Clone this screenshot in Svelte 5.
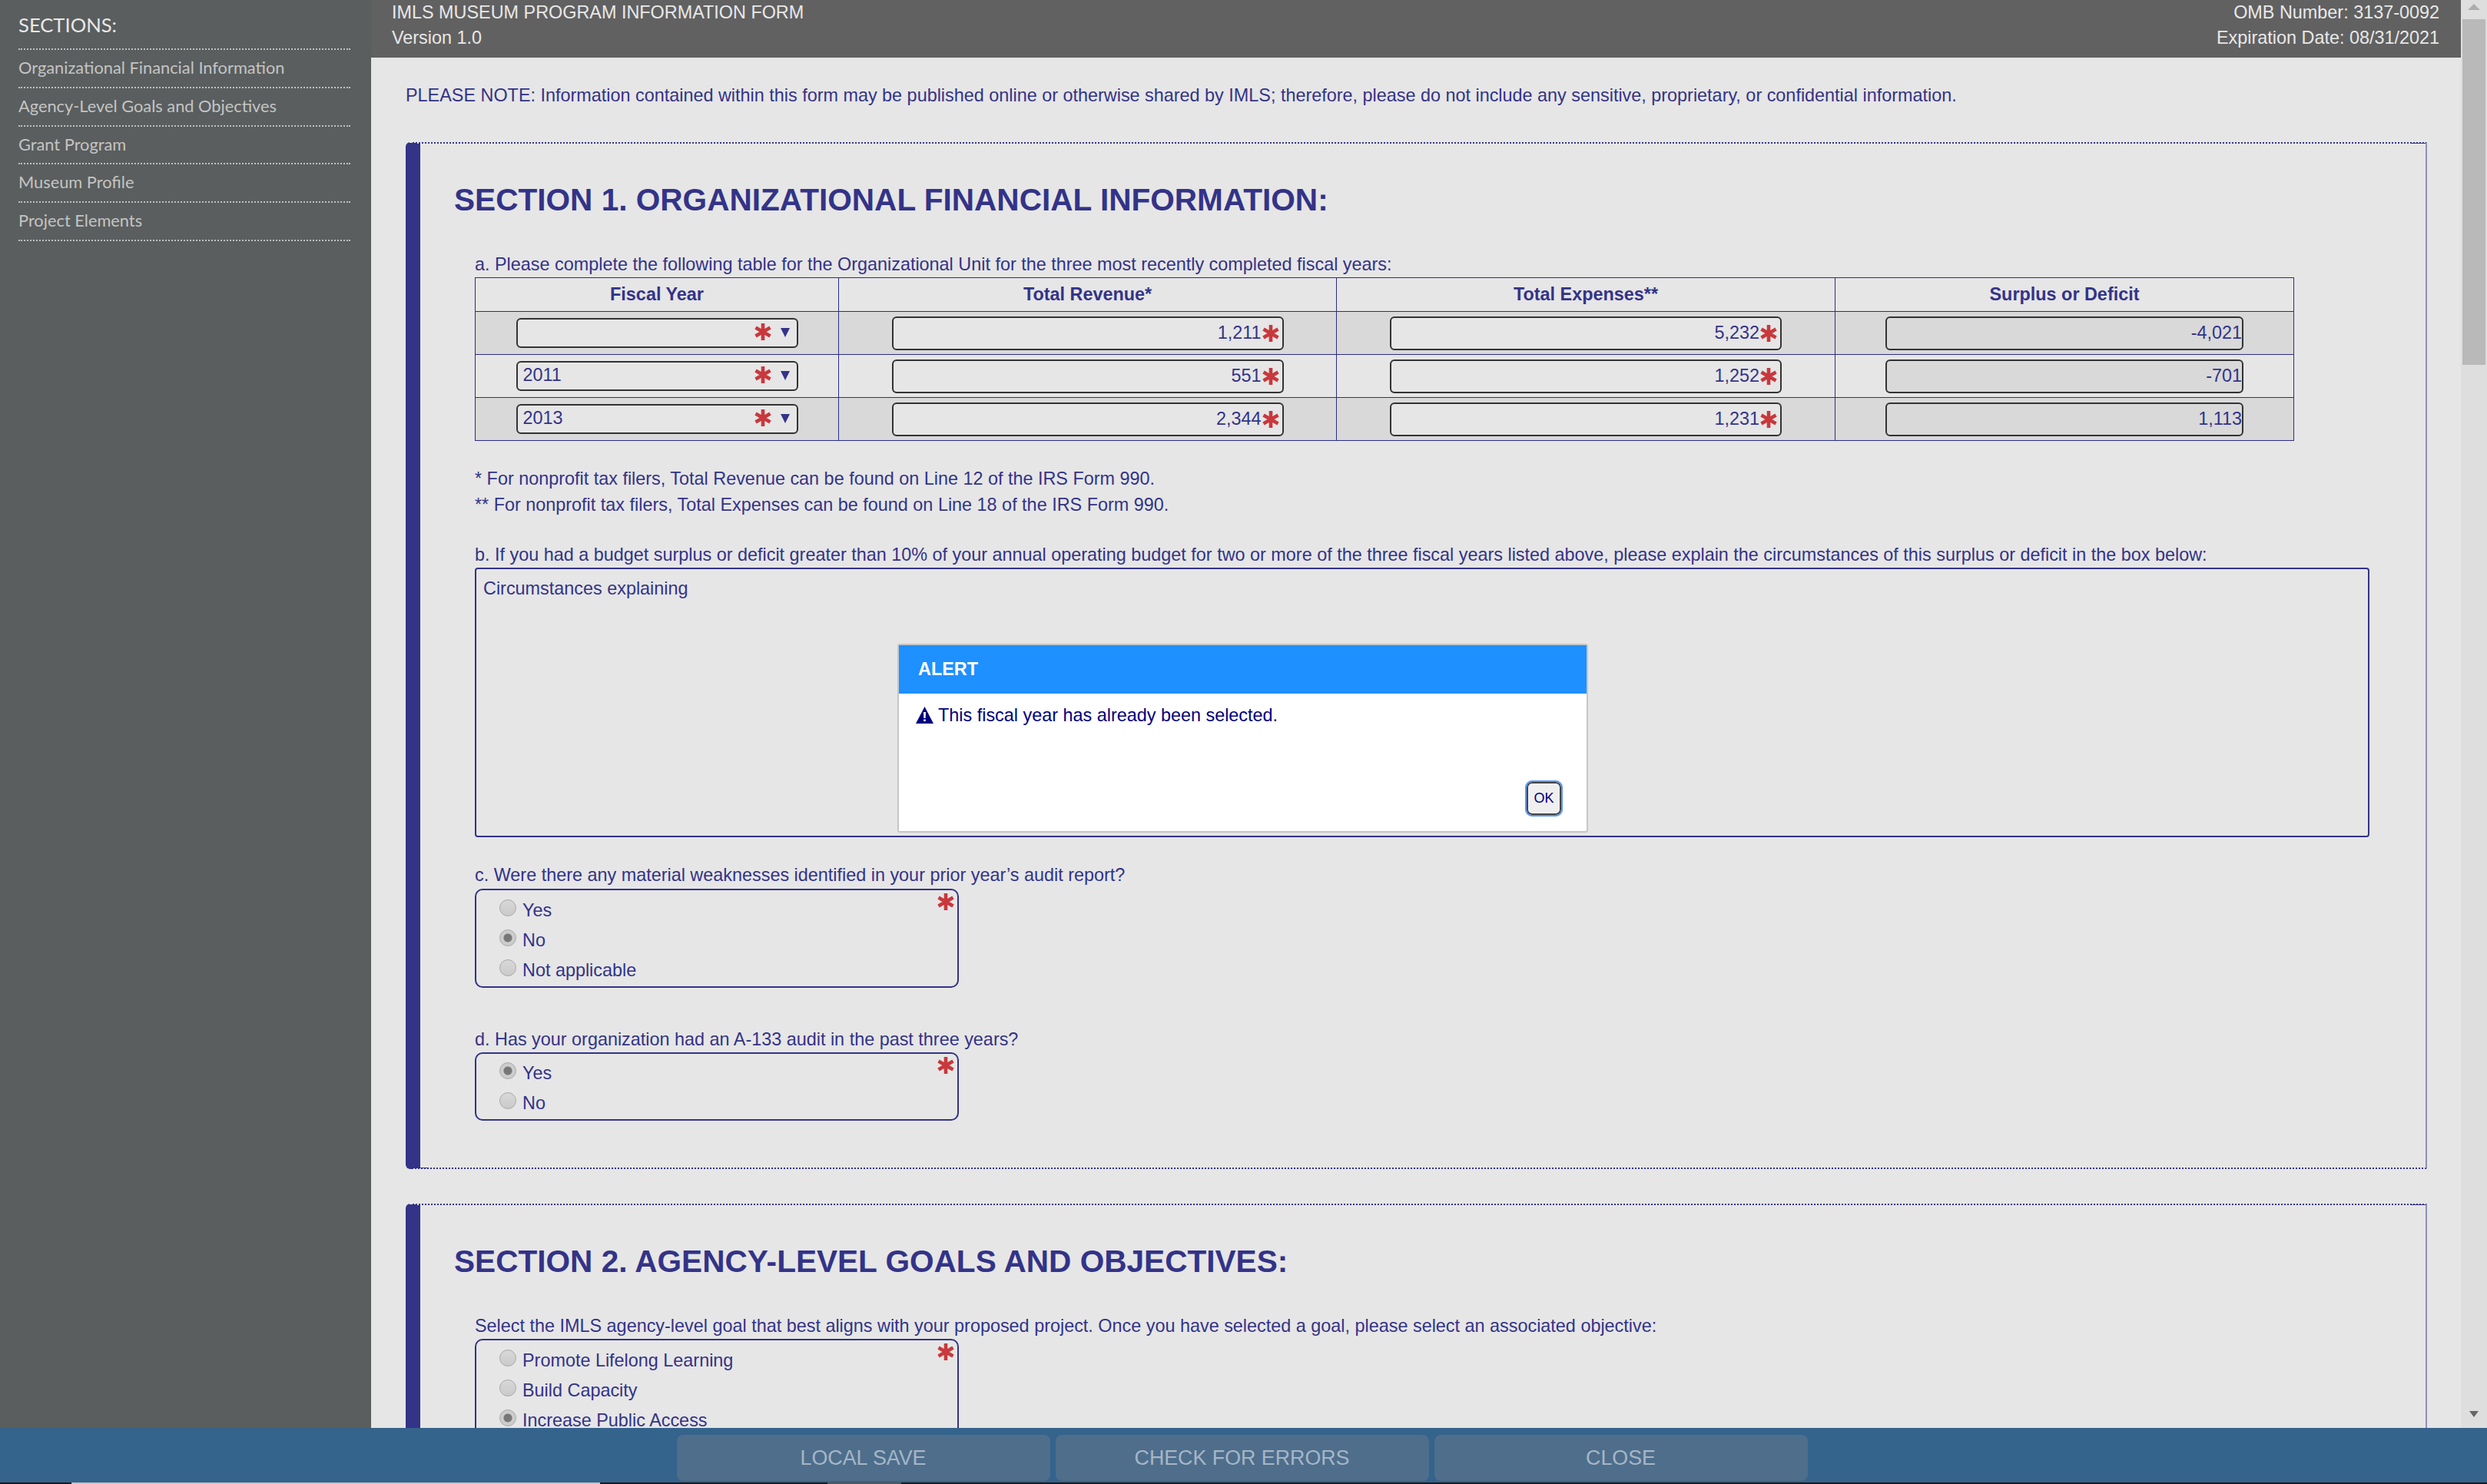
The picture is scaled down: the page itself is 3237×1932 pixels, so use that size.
<script>
  const links = ['Organizational Financial Information', 'Agency-Level Goals and Objectives', 'Grant Program', 'Museum Profile', 'Project Elements'];
  const rows = [
    { year: '', rev: '1,211', exp: '5,232', sur: '-4,021' },
    { year: '2011', rev: '551', exp: '1,252', sur: '-701' },
    { year: '2013', rev: '2,344', exp: '1,231', sur: '1,113' }
  ];
</script>

{#snippet star(cls)}
  <svg class="star {cls}" viewBox="0 0 22 22" aria-hidden="true">
    <path d="M11 0V22M1.5 5.5L20.5 16.5M20.5 5.5L1.5 16.5" stroke="#c8383c" stroke-width="4.6" fill="none" />
  </svg>
{/snippet}

{#snippet radio(name, label, checked)}
  <label class="radio-row">
    <input type="radio" {name} {checked} disabled />
    <span>{label}</span>
  </label>
{/snippet}

<div class="root">
  <aside class="sidebar">
    <div class="side-title">SECTIONS:</div>
    <ul>
      {#each links as l}
        <li>{l}</li>
      {/each}
    </ul>
  </aside>

  <div class="main">
    <header class="top">
      <div>
        <div>IMLS MUSEUM PROGRAM INFORMATION FORM</div>
        <div>Version 1.0</div>
      </div>
      <div class="omb">
        <div>OMB Number: 3137-0092</div>
        <div>Expiration Date: 08/31/2021</div>
      </div>
    </header>

    <div class="content">
      <p class="note">PLEASE NOTE: Information contained within this form may be published online or otherwise shared by IMLS; therefore, please do not include any sensitive, proprietary, or confidential information.</p>

      <section class="sec">
        <h2>SECTION 1. ORGANIZATIONAL FINANCIAL INFORMATION:</h2>
        <div class="lbl a">a. Please complete the following table for the Organizational Unit for the three most recently completed fiscal years:</div>
        <table>
          <colgroup><col class="c1" /><col class="c2" /><col class="c3" /><col class="c4" /></colgroup>
          <thead>
            <tr><th>Fiscal Year</th><th>Total Revenue*</th><th>Total Expenses**</th><th>Surplus or Deficit</th></tr>
          </thead>
          <tbody>
            {#each rows as r}
              <tr>
                <td>
                  <div class="select">
                    <span>{r.year}</span>
                    {@render star('s-sel')}
                    <svg class="caret" viewBox="0 0 12 12" aria-hidden="true"><path d="M0 0H12L6 12Z" fill="#333388" /></svg>
                  </div>
                </td>
                <td><div class="field"><input class="num" readonly value={r.rev} />{@render star('s-in')}</div></td>
                <td><div class="field"><input class="num" readonly value={r.exp} />{@render star('s-in')}</div></td>
                <td><input class="num calc" readonly value={r.sur} /></td>
              </tr>
            {/each}
          </tbody>
        </table>

        <div class="foot">* For nonprofit tax filers, Total Revenue can be found on Line 12 of the IRS Form 990.</div>
        <div class="lbl">** For nonprofit tax filers, Total Expenses can be found on Line 18 of the IRS Form 990.</div>

        <div class="lbl b">b. If you had a budget surplus or deficit greater than 10% of your annual operating budget for two or more of the three fiscal years listed above, please explain the circumstances of this surplus or deficit in the box below:</div>
        <textarea readonly value="Circumstances explaining"></textarea>

        <div class="lbl c">c. Were there any material weaknesses identified in your prior year’s audit report?</div>
        <div class="group g3">
          {@render star('s-grp')}
          {@render radio('c', 'Yes', false)}
          {@render radio('c', 'No', true)}
          {@render radio('c', 'Not applicable', false)}
        </div>

        <div class="lbl d">d. Has your organization had an A-133 audit in the past three years?</div>
        <div class="group g2">
          {@render star('s-grp')}
          {@render radio('d', 'Yes', true)}
          {@render radio('d', 'No', false)}
        </div>
      </section>

      <section class="sec two">
        <h2>SECTION 2. AGENCY-LEVEL GOALS AND OBJECTIVES:</h2>
        <div class="lbl a">Select the IMLS agency-level goal that best aligns with your proposed project. Once you have selected a goal, please select an associated objective:</div>
        <div class="group g3 g-goal">
          {@render star('s-grp')}
          {@render radio('g', 'Promote Lifelong Learning', false)}
          {@render radio('g', 'Build Capacity', false)}
          {@render radio('g', 'Increase Public Access', true)}
        </div>
      </section>
    </div>
  </div>

  <div class="scroll">
    <svg class="up" viewBox="0 0 16 8" aria-hidden="true"><path d="M8 0L16 8H0Z" fill="#adadad" /></svg>
    <div class="thumb"></div>
    <svg class="down" viewBox="0 0 12 8" aria-hidden="true"><path d="M0 0H12L6 8Z" fill="#666" /></svg>
  </div>

  <div class="alert" role="alertdialog">
    <div class="alert-head">ALERT</div>
    <div class="alert-body">
      <svg class="warn" viewBox="0 0 23 22" aria-hidden="true">
        <path d="M11.5 0L23 22H0Z" fill="#000080" />
        <path d="M10 7H13L12.6 15H10.4ZM10.2 16.5H12.8V19H10.2Z" fill="#fff" />
      </svg>
      <span>This fiscal year has already been selected.</span>
    </div>
    <div class="alert-foot"><button>OK</button></div>
  </div>

  <footer class="footer">
    <div class="btns">
      <button>LOCAL SAVE</button>
      <button>CHECK FOR ERRORS</button>
      <button>CLOSE</button>
    </div>
    <div class="strip"><i class="p1"></i><i class="p2"></i></div>
  </footer>
</div>

<style>
  :global(body) { margin: 0; background: #e6e6e6; }
  .root {
    position: relative;
    display: grid;
    grid-template-columns: 483px 1fr 34px;
    width: 3237px;
    height: 1932px;
    overflow: hidden;
    font-family: "Liberation Sans", Arial, sans-serif;
    font-size: 23.4px;
    color: #333388;
  }
  .sidebar { background: #5a5e5e; padding: 0 27px 0 24px; }
  .side-title {
    font-family: Lato, sans-serif;
    font-size: 25.6px;
    color: #e8e8e8;
    line-height: 64px;
    height: 63px;
    border-bottom: 2px dotted #c0c0c0;
  }
  ul { list-style: none; margin: 0; padding: 0; }
  li {
    font-family: Lato, sans-serif;
    font-size: 21.8px;
    color: #c4c4c4;
    height: 47.8px;
    line-height: 46px;
    border-bottom: 2px dotted #c0c0c0;
  }
  .main { display: flex; flex-direction: column; min-width: 0; height: 1932px; overflow: hidden; }
  .top {
    flex: none;
    height: 75px;
    background: #616161;
    color: #e8e8e8;
    display: flex;
    justify-content: space-between;
    padding: 0 28px 0 27px;
    line-height: 33px;
  }
  .omb { text-align: right; }
  .content { flex: 1; overflow: hidden; padding: 32px 44px 0 45px; background: #e6e6e6; }
  .note { margin: 0 0 44px; line-height: 34px; }
  .sec {
    box-sizing: border-box;
    width: 2631px;
    border-left: 19px solid #333388;
    border-top: 2px dotted #333388;
    border-right: 2px solid #8f8fbb;
    border-bottom: 2px dotted #333388;
    border-top-left-radius: 6px;
    border-bottom-left-radius: 6px;
    padding: 49px 0 61px 71px;
    margin-bottom: 45px;
  }
  h2 {
    margin: 0 0 43px -27px;
    font-size: 40.6px;
    line-height: 48px;
    font-weight: bold;
    color: #333388;
  }
  .lbl, .foot { line-height: 34px; }
  .foot { margin-top: 32px; }
  .b { margin-top: 31px; }
  .c { margin-top: 32px; margin-bottom: 1px; }
  .d { margin-top: 50px; }
  table { border-collapse: collapse; table-layout: fixed; width: 2367px; }
  .c1 { width: 473px; } .c2 { width: 648px; } .c3 { width: 649px; } .c4 { width: 597px; }
  th, td { border: 1.5px solid #2c2c84; padding: 0; text-align: center; }
  th { height: 43px; }
  td { height: 55px; }
  tbody tr:nth-child(odd) { background: #d9d9d9; }
  tbody tr:nth-child(even) { background: #e6e6e6; }
  .select {
    position: relative;
    box-sizing: border-box;
    width: 367px;
    height: 39px;
    margin: 0 auto;
    border: 2px solid #333;
    border-radius: 6px;
    background: #e6e6e6;
    text-align: left;
    padding-left: 7px;
    line-height: 33px;
  }
  .field { position: relative; width: 510px; margin: 0 auto; }
  .num {
    display: block;
    box-sizing: border-box;
    width: 510px;
    height: 44px;
    margin: 0 auto;
    border: 2px solid #333;
    border-radius: 6px;
    background: #e6e6e6;
    font: 23.4px "Liberation Sans", Arial, sans-serif;
    color: #333388;
    text-align: right;
    padding: 0 27px 0 4px;
    outline: none;
  }
  .calc { width: 466px; background: #d9d9d9; padding-right: 0; }
  .star { position: absolute; width: 22px; height: 22px; }
  .s-sel { right: 33px; top: 5px; }
  .s-in { right: 6px; top: 11px; }
  .s-grp { right: 4px; top: 4px; }
  .caret { position: absolute; right: 9px; top: 11px; width: 12px; height: 12px; }
  textarea {
    display: block;
    box-sizing: border-box;
    width: 2466px;
    height: 351px;
    border: 2px solid #333388;
    border-radius: 4px;
    background: #e6e6e6;
    color: #333388;
    font: 23.4px/28px "Liberation Sans", Arial, sans-serif;
    padding: 11px 9px;
    resize: none;
    outline: none;
  }
  .group {
    position: relative;
    box-sizing: border-box;
    width: 630px;
    border: 2px solid #333388;
    border-radius: 10px;
    padding: 7px 0 0 30px;
  }
  .g3 { height: 129px; }
  .g2 { height: 89px; padding-top: 6px; }
  .g-goal { height: 300px; }
  .radio-row { display: flex; align-items: center; gap: 8px; height: 39px; line-height: 39px; }
  input[type=radio] {
    appearance: none;
    box-sizing: border-box;
    width: 22px;
    height: 22px;
    margin: -8px 0 0;
    border: 1px solid #aaa;
    border-radius: 50%;
    background: linear-gradient(#d8d8d8, #cacaca);
    flex: none;
  }
  input[type=radio]:checked {
    background: radial-gradient(circle, #777 0 5px, #ccc 6px);
  }
  .scroll { position: relative; background: #dedede; }
  .up { position: absolute; left: 9px; top: 5px; width: 16px; height: 8px; }
  .thumb { position: absolute; left: 2px; top: 25px; width: 30px; height: 450px; background: #b9b9b9; }
  .down { position: absolute; left: 11px; top: 1837px; width: 12px; height: 8px; }
  .alert {
    position: absolute;
    left: 1168px;
    top: 838px;
    box-sizing: border-box;
    width: 899px;
    height: 246px;
    background: #fff;
    border: 2px solid #c6c6c6;
    border-radius: 3px;
    color: #000080;
    display: flex;
    flex-direction: column;
  }
  .alert-head {
    background: #1e90ff;
    color: #fff;
    font-weight: bold;
    font-size: 23.4px;
    height: 63px;
    line-height: 62px;
    padding-left: 25px;
    flex: none;
  }
  .alert-body { display: flex; align-items: center; gap: 6px; padding: 16px 0 0 22px; line-height: 24px; }
  .warn { width: 23px; height: 22px; flex: none; }
  .alert-foot { margin-top: auto; display: flex; justify-content: flex-end; padding: 0 33px 21px 0; }
  .alert-foot button {
    box-sizing: border-box;
    width: 45px;
    height: 43px;
    padding: 0;
    border: 2px solid #444;
    border-radius: 7px;
    background: #efefef;
    outline: 2px solid #5a96f5;
    font: 18px "Liberation Sans", Arial, sans-serif;
    color: #000080;
  }
  .footer { position: absolute; left: 0; right: 0; bottom: 0; height: 73px; background: #34638c; display: flex; flex-direction: column; }
  .btns { flex: 1; display: flex; justify-content: center; gap: 7px; padding-top: 9px; padding-right: 4px; box-sizing: border-box; height: 71px; }
  .btns button {
    width: 486px;
    height: 60px;
    border: 0;
    border-radius: 8px;
    background: #4e6e8c;
    color: #a6b6c6;
    font: 26.8px "Liberation Sans", Arial, sans-serif;
  }
  .strip { flex: none; position: relative; height: 2px; background: #1a1a1a; }
  .strip i { position: absolute; top: 0; height: 2px; }
  .p1 { left: 93px; width: 688px; background: #c4c4c4; }
  .p2 { left: 1077px; width: 96px; background: #555; }
</style>
